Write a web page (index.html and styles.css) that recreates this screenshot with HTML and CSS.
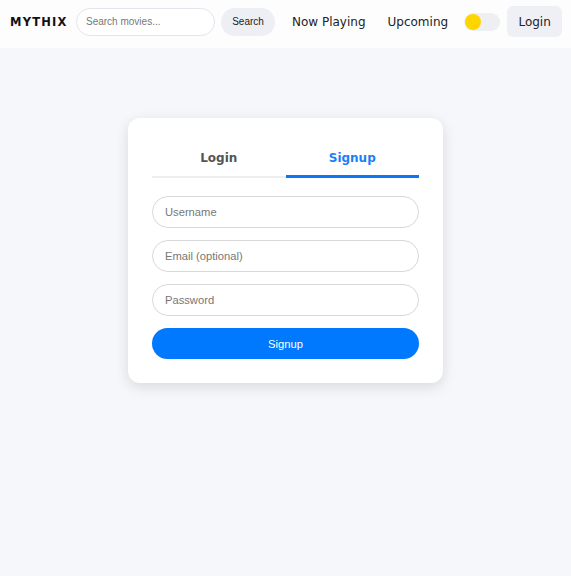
FILE: index.html
```html
<!DOCTYPE html>
<html>
<head>
<meta charset="utf-8">
<link rel="stylesheet" href="styles.css">
</head>
<body>
<header class="nav">
  <div class="brand">MYTHIX</div>
  <form class="search">
    <input class="search-input" type="text" placeholder="Search movies...">
    <button class="search-btn" type="button">Search</button>
  </form>
  <a class="nav-link">Now Playing</a>
  <a class="nav-link">Upcoming</a>
  <div class="toggle"><span class="knob"></span></div>
  <button class="login-btn" type="button">Login</button>
</header>
<main class="main">
  <section class="card">
    <div class="tabs">
      <div class="tab">Login</div>
      <div class="tab active">Signup</div>
    </div>
    <form class="form">
      <input class="field" type="text" placeholder="Username">
      <input class="field" type="email" placeholder="Email (optional)">
      <input class="field" type="password" placeholder="Password">
      <button class="submit" type="button">Signup</button>
    </form>
  </section>
</main>
</body>
</html>
```
FILE: styles.css
```css
* { box-sizing: border-box; }
html, body { margin: 0; padding: 0; }
body {
  background: #f6f7fb;
  font-family: "DejaVu Sans", sans-serif;
  width: 571px;
  height: 576px;
  overflow: hidden;
}
.nav {
  height: 48px;
  background: #fdfdfd;
  display: flex;
  align-items: center;
  padding: 0 9px 5px 10px;
  white-space: nowrap;
}
.nav > * { flex-shrink: 0; }
.brand {
  font-weight: bold;
  font-size: 11.5px;
  letter-spacing: 1.2px;
  color: #111;
  width: 56px;
  margin-right: 10px;
}
.search { display: flex; align-items: center; gap: 6px; margin-right: 17px; }
.search-input {
  width: 139px;
  height: 28px;
  border: 1px solid #e4e4ec;
  border-radius: 14px;
  padding: 0 9px;
  font-family: "Liberation Sans", Arial, sans-serif;
  font-size: 10px;
  background: #fff;
  outline: none;
}
.search-input::placeholder { color: #777; }
.search-btn {
  width: 54px;
  height: 28px;
  border: none;
  border-radius: 14px;
  background: #eeeff5;
  font-family: "Liberation Sans", Arial, sans-serif;
  font-size: 10px;
  color: #222;
  padding: 0;
}
.nav-link {
  font-size: 12px;
  color: #222;
  margin-right: 22px;
}
.nav-link + .nav-link { margin-right: 16px; }
.toggle {
  width: 36px;
  height: 18px;
  border-radius: 9px;
  background: #eeeff3;
  display: flex;
  align-items: center;
  padding-left: 1px;
  margin-right: 7px;
}
.knob {
  width: 16px;
  height: 16px;
  border-radius: 50%;
  background: #ffd500;
}
.login-btn {
  width: 55px;
  height: 31px;
  border: none;
  border-radius: 6px;
  background: #eff0f6;
  font-family: "DejaVu Sans", sans-serif;
  font-size: 12px;
  color: #222;
  padding: 0;
}
.main {
  display: flex;
  justify-content: center;
  padding-top: 70px;
}
.card {
  width: 315px;
  background: #fff;
  border-radius: 12px;
  box-shadow: 0 4px 14px rgba(0, 0, 0, 0.12);
  padding: 24px;
}
.tabs {
  display: flex;
  margin-bottom: 18px;
}
.tab {
  flex: 1;
  text-align: center;
  font-weight: bold;
  font-size: 12px;
  color: #555;
  padding: 9px 0 11px;
  border-bottom: 2px solid #eeeeee;
}
.tab.active {
  color: #1a7ff5;
  border-bottom: 3px solid #0a78f5;
  padding-bottom: 10px;
}
.form { display: flex; flex-direction: column; gap: 12px; }
.field {
  height: 32px;
  border: 1px solid #d8d8d8;
  border-radius: 16px;
  padding: 0 12px;
  font-family: "Liberation Sans", Arial, sans-serif;
  font-size: 11.2px;
  outline: none;
  background: #fff;
}
.field::placeholder { color: #777; }
.submit {
  height: 31px;
  border: none;
  border-radius: 16px;
  background: #0079fe;
  color: #fff;
  font-family: "Liberation Sans", Arial, sans-serif;
  font-size: 11.2px;
  padding: 0;
}
```
